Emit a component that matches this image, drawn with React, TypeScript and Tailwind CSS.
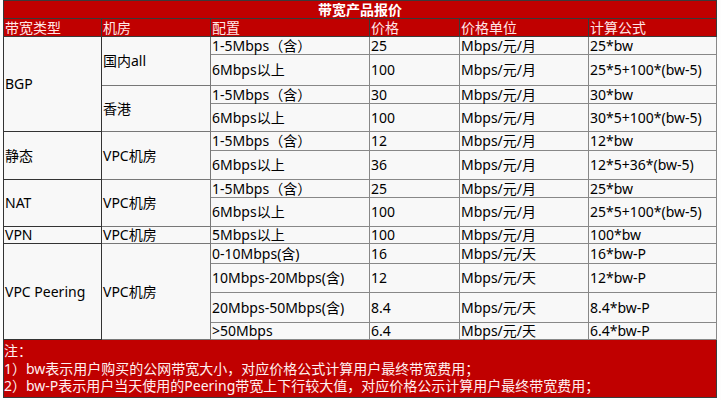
import React from "react";

type Row = {
  spec: string;
  price: string;
  unit: string;
  formula: string;
  h: number;
};

type Room = { name: string; rows: Row[] };
type Group = { type: string; rooms: Room[] };

const GROUPS: Group[] = [
  {
    type: "BGP",
    rooms: [
      {
        name: "国内all",
        rows: [
          { spec: "1-5Mbps（含）", price: "25", unit: "Mbps/元/月", formula: "25*bw", h: 18 },
          { spec: "6Mbps以上", price: "100", unit: "Mbps/元/月", formula: "25*5+100*(bw-5)", h: 31 },
        ],
      },
      {
        name: "香港",
        rows: [
          { spec: "1-5Mbps（含）", price: "30", unit: "Mbps/元/月", formula: "30*bw", h: 18 },
          { spec: "6Mbps以上", price: "100", unit: "Mbps/元/月", formula: "30*5+100*(bw-5)", h: 28 },
        ],
      },
    ],
  },
  {
    type: "静态",
    rooms: [
      {
        name: "VPC机房",
        rows: [
          { spec: "1-5Mbps（含）", price: "12", unit: "Mbps/元/月", formula: "12*bw", h: 19 },
          { spec: "6Mbps以上", price: "36", unit: "Mbps/元/月", formula: "12*5+36*(bw-5)", h: 29 },
        ],
      },
    ],
  },
  {
    type: "NAT",
    rooms: [
      {
        name: "VPC机房",
        rows: [
          { spec: "1-5Mbps（含）", price: "25", unit: "Mbps/元/月", formula: "25*bw", h: 18 },
          { spec: "6Mbps以上", price: "100", unit: "Mbps/元/月", formula: "25*5+100*(bw-5)", h: 29 },
        ],
      },
    ],
  },
  {
    type: "VPN",
    rooms: [
      {
        name: "VPC机房",
        rows: [{ spec: "5Mbps以上", price: "100", unit: "Mbps/元/月", formula: "100*bw", h: 17 }],
      },
    ],
  },
  {
    type: "VPC Peering",
    rooms: [
      {
        name: "VPC机房",
        rows: [
          { spec: "0-10Mbps(含)", price: "16", unit: "Mbps/元/天", formula: "16*bw-P", h: 20 },
          { spec: "10Mbps-20Mbps(含)", price: "12", unit: "Mbps/元/天", formula: "12*bw-P", h: 29 },
          { spec: "20Mbps-50Mbps(含)", price: "8.4", unit: "Mbps/元/天", formula: "8.4*bw-P", h: 30 },
          { spec: ">50Mbps", price: "6.4", unit: "Mbps/元/天", formula: "6.4*bw-P", h: 17 },
        ],
      },
    ],
  },
];

const HEADERS = ["带宽类型", "机房", "配置", "价格", "价格单位", "计算公式"];

export default function App() {
  return (
    <div
      className="min-h-[400px] w-[721px] bg-[#fdfdfd] pl-[3px] text-[14px] text-black"
      style={{ fontFamily: '"Noto Sans", "Noto Sans CJK SC", sans-serif' }}
    >
      <table className="table-fixed border-collapse border border-[#3a3a3a] leading-[16px]">
        <colgroup>
          <col className="w-[98px]" />
          <col className="w-[109px]" />
          <col className="w-[159px]" />
          <col className="w-[90px]" />
          <col className="w-[129px]" />
          <col className="w-[128px]" />
        </colgroup>
        <tbody>
          <tr className="h-[18px] bg-[#c00000]">
            <td colSpan={6} className="p-0 text-center font-bold text-white">
              带宽产品报价
            </td>
          </tr>
          <tr className="h-[18px] bg-[#c00000]">
            {HEADERS.map((h) => (
              <td key={h} className="border border-[#3a3a3a] p-0 pl-px text-[#ffe6e6]">
                {h}
              </td>
            ))}
          </tr>
          {GROUPS.map((g) => {
            const total = g.rooms.reduce((n, r) => n + r.rows.length, 0);
            return g.rooms.map((room, ri) =>
              room.rows.map((row, i) => (
                <tr key={g.type + room.name + i} className="bg-[#f8f8f8]" style={{ height: row.h }}>
                  {ri === 0 && i === 0 && (
                    <td rowSpan={total} className="border border-[#333] p-0 pl-px align-middle">
                      {g.type}
                    </td>
                  )}
                  {i === 0 && (
                    <td
                      rowSpan={room.rows.length}
                      className="border border-[#777] border-l-[#222] p-0 pl-px align-middle"
                    >
                      {room.name}
                    </td>
                  )}
                  <td className="border border-[#888] p-0 pl-px align-middle whitespace-nowrap">{row.spec}</td>
                  <td className="border border-[#888] border-l-[#222] p-0 pl-px align-middle">{row.price}</td>
                  <td className="border border-[#888] p-0 pl-px align-middle whitespace-nowrap">{row.unit}</td>
                  <td className="border border-[#888] p-0 pl-px align-middle whitespace-nowrap">{row.formula}</td>
                </tr>
              ))
            );
          })}
          <tr className="h-[58px] bg-[#c00000]">
            <td colSpan={6} className="border border-[#3a3a3a] p-0 pt-[2px] align-top text-[#fff0f0] leading-[17.5px]">
              <div>注：</div>
              <div>1）bw表示用户购买的公网带宽大小，对应价格公式计算用户最终带宽费用；</div>
              <div>2）bw-P表示用户当天使用的Peering带宽上下行较大值，对应价格公示计算用户最终带宽费用；</div>
            </td>
          </tr>
        </tbody>
      </table>
    </div>
  );
}
